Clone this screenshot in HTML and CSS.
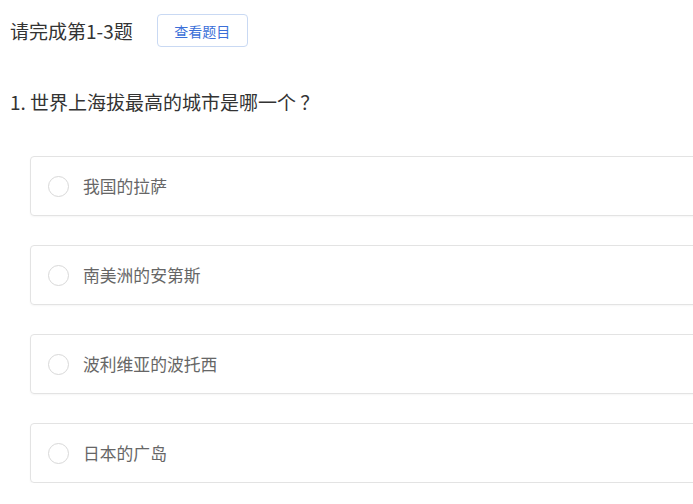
FILE: index.html
```html
<!DOCTYPE html>
<html lang="zh">
<head>
<meta charset="utf-8">
<link rel="stylesheet" href="styles.css">
</head>
<body>
<div class="page">
  <div class="header">
    <span class="title">请完成第1-3题</span>
    <button class="view-btn">查看题目</button>
  </div>
  <div class="question">1. 世界上海拔最高的城市是哪一个 ？</div>
  <div class="options">
    <div class="option"><span class="radio"></span><span class="label">我国的拉萨</span></div>
    <div class="option"><span class="radio"></span><span class="label">南美洲的安第斯</span></div>
    <div class="option"><span class="radio"></span><span class="label">波利维亚的波托西</span></div>
    <div class="option"><span class="radio"></span><span class="label">日本的广岛</span></div>
  </div>
</div>
</body>
</html>
```
FILE: styles.css
```css
html, body {
  margin: 0;
  padding: 0;
  background: #fff;
  overflow: hidden;
}
body {
  font-family: "Noto Sans CJK SC", "Liberation Sans", sans-serif;
  color: #333;
}
.page {
  padding: 14px 0 0 10px;
  width: 720px;
}
.header {
  display: flex;
  align-items: center;
  height: 33px;
}
.title {
  font-size: 19px;
  color: #333;
  line-height: 1;
}
.view-btn {
  margin-left: 24px;
  width: 91px;
  height: 33px;
  border: 1px solid #c9d9f3;
  border-radius: 4px;
  background: #fff;
  color: #3b6fd8;
  font-family: "Noto Sans CJK SC", sans-serif;
  font-size: 14px;
  padding: 0;
}
.question {
  margin-top: 43px;
  font-size: 19px;
  line-height: 24px;
  color: #333;
}
.options {
  margin-top: 42px;
  margin-left: 20px;
  display: flex;
  flex-direction: column;
  gap: 29px;
}
.option {
  display: flex;
  align-items: center;
  height: 58px;
  border: 1px solid #e3e3e3;
  border-radius: 4px;
  padding-left: 17px;
  box-shadow: 0 1px 2px rgba(0,0,0,0.04);
}
.radio {
  width: 21px;
  height: 21px;
  border: 1.5px solid #d8d8d8;
  border-radius: 50%;
  box-sizing: border-box;
  flex: none;
}
.label {
  margin-left: 14px;
  font-size: 16.8px;
  color: #666;
}
```
